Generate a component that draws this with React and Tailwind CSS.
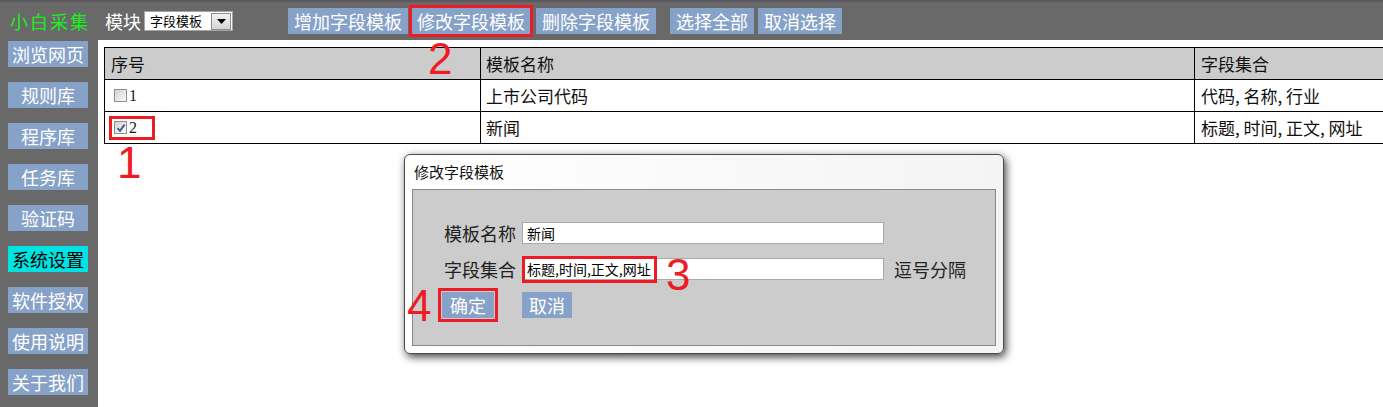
const sideItems = ['浏览网页', '规则库', '程序库', '任务库', '验证码', '系统设置', '软件授权', '使用说明', '关于我们'];

const rows = [
    { id: 1, name: '上市公司代码', fields: '代码, 名称, 行业', checked: false },
    { id: 2, name: '新闻', fields: '标题, 时间, 正文, 网址', checked: true },
];

const Checkbox = ({ checked }) => (
    <span className="w-[13px] h-[13px] border border-[#8e8f8f] bg-linear-to-br from-[#d2d2d2] to-[#fafafa] flex items-center justify-center shrink-0">
        {checked && (
            <svg width="10" height="10" viewBox="0 0 10 10">
                <path d="M1.5 5.2 L4 7.8 L8.6 1.6" fill="none" stroke="#3d5591" strokeWidth="1.8" />
            </svg>
        )}
    </span>
);

const Mark = ({ n, className }) => (
    <span className={`absolute text-[44px] leading-none text-[#ed1c24] font-['Liberation_Sans',Arial,sans-serif] ${className}`}>{n}</span>
);

const App = () => {
    return (
        <div className="relative w-[1383px] h-[407px] overflow-hidden bg-white font-['Noto_Sans_CJK_SC',sans-serif] text-[#111]">
            {/* top bar */}
            <div className="h-[40px] bg-[#696969] border-t-2 border-[#5d5860] flex items-center pl-[10px]">
                <span className="w-[95px] text-[18px] leading-[22px] tracking-[2px] text-[#1aef1a]">小白采集</span>
                <span className="text-[18px] leading-[22px] text-white">模块</span>
                <div className="ml-[3px] w-[89px] h-[20px] bg-white border border-[#a5a5a5] flex items-center">
                    <span className="flex-1 pl-[5px] text-[13px] leading-[18px] text-black">字段模板</span>
                    <span className="w-[20px] h-[17px] mr-[1px] bg-linear-to-b from-[#f2f2f2] to-[#d5d5d5] border border-[#8e8e8e] flex items-center justify-center">
                        <svg width="9" height="5" viewBox="0 0 9 5"><path d="M0 0 H9 L4.5 5 Z" fill="#000" /></svg>
                    </span>
                </div>
                <button className="ml-[55px] w-[120px] h-[26px] bg-[#87a2c8] text-white text-[18px] leading-[26px]">增加字段模板</button>
                <button className="ml-[4px] w-[118px] h-[26px] bg-[#87a2c8] text-white text-[18px] leading-[26px] outline-[3px] outline-[#ed1c24]">修改字段模板</button>
                <button className="ml-[6px] w-[120px] h-[26px] bg-[#87a2c8] text-white text-[18px] leading-[26px]">删除字段模板</button>
                <button className="ml-[14px] w-[84px] h-[26px] bg-[#87a2c8] text-white text-[18px] leading-[26px]">选择全部</button>
                <button className="ml-[4px] w-[84px] h-[26px] bg-[#87a2c8] text-white text-[18px] leading-[26px]">取消选择</button>
            </div>

            <div className="flex h-[367px]">
                {/* sidebar */}
                <div className="w-[98px] shrink-0 bg-[#696969] pt-[1px] pl-[8px] flex flex-col gap-[15px]">
                    {sideItems.map((item) => (
                        <div
                            key={item}
                            className={`w-[80px] h-[26px] text-[18px] leading-[26px] text-center ${item === '系统设置' ? 'bg-[#00e3e3] text-black' : 'bg-[#87a2c8] text-white'}`}
                        >
                            {item}
                        </div>
                    ))}
                </div>

                {/* main */}
                <div className="flex-1 overflow-hidden pl-[6px] pt-[7px]">
                    <div className="w-[1300px] grid grid-cols-[376px_714px_1fr] border-t border-l border-black text-[17px]">
                        <div className="h-[32px] bg-[#cccccc] border-r border-b border-black pl-[6px] flex items-center">序号</div>
                        <div className="h-[32px] bg-[#cccccc] border-r border-b border-black pl-[5px] flex items-center">模板名称</div>
                        <div className="h-[32px] bg-[#cccccc] border-r border-b border-black pl-[6px] flex items-center">字段集合</div>
                        {rows.map((row) => (
                            <div key={row.id} className="contents">
                                <div className="h-[32px] border-r border-b border-black pl-[7px] flex items-center">
                                    <span className={`w-[40px] h-[18px] px-[2px] flex items-center ${row.checked ? 'outline-[3px] outline-[#ed1c24]' : ''}`}>
                                        <Checkbox checked={row.checked} />
                                        <span className="ml-[2px] text-[16px] leading-none font-['Liberation_Serif',serif] text-[#1a1a1a]">{row.id}</span>
                                    </span>
                                </div>
                                <div className="h-[32px] border-r border-b border-black pl-[5px] flex items-center">{row.name}</div>
                                <div className="h-[32px] border-r border-b border-black pl-[6px] flex items-center">{row.fields}</div>
                            </div>
                        ))}
                    </div>
                </div>
            </div>

            {/* dialog */}
            <div className="absolute left-[404px] top-[154px] w-[600px] h-[200px] rounded-[6px] border border-[#4a4a4a] bg-linear-to-r from-white to-[#f4f4f4] shadow-[2px_3px_8px_rgba(0,0,0,0.75)] flex flex-col">
                <div className="h-[34px] pl-[9px] flex items-center text-[15px] text-[#111]">修改字段模板</div>
                <div className="flex-1 mx-[7px] mb-[7px] border border-[#8a8a8a] bg-[#cccccc] pl-[31px] pt-[32px] text-[18px] text-[#222]">
                    <div className="flex items-center h-[22px]">
                        <span className="w-[78px]">模板名称</span>
                        <div className="w-[362px] h-[22px] bg-white border border-[#a9a9a9] pl-[4px] text-[14px] leading-[20px] text-black">新闻</div>
                    </div>
                    <div className="flex items-center h-[22px] mt-[14px]">
                        <span className="w-[78px]">字段集合</span>
                        <div className="relative w-[362px] h-[22px] bg-white border border-[#a9a9a9] pl-[4px] text-[14px] leading-[20px] text-black">
                            标题,时间,正文,网址
                            <span className="absolute left-[-1px] top-[-3px] w-[135px] h-[27px] border-[3px] border-[#ed1c24]" />
                        </div>
                        <span className="ml-[10px]">逗号分隔</span>
                    </div>
                    <div className="flex items-center mt-[12px] ml-[-2px]">
                        <button className="w-[52px] h-[26px] bg-[#87a2c8] text-white text-[18px] leading-[26px] outline-[3px] outline-offset-1 outline-[#ed1c24]">确定</button>
                        <button className="ml-[28px] w-[50px] h-[26px] bg-[#87a2c8] text-white text-[18px] leading-[26px]">取消</button>
                    </div>
                </div>
            </div>

            {/* annotations */}
            <Mark n="2" className="left-[428px] top-[37px]" />
            <Mark n="1" className="left-[117px] top-[141px]" />
            <Mark n="3" className="left-[666px] top-[253px]" />
            <Mark n="4" className="left-[407px] top-[284px]" />
        </div>
    );
};

export default App;
